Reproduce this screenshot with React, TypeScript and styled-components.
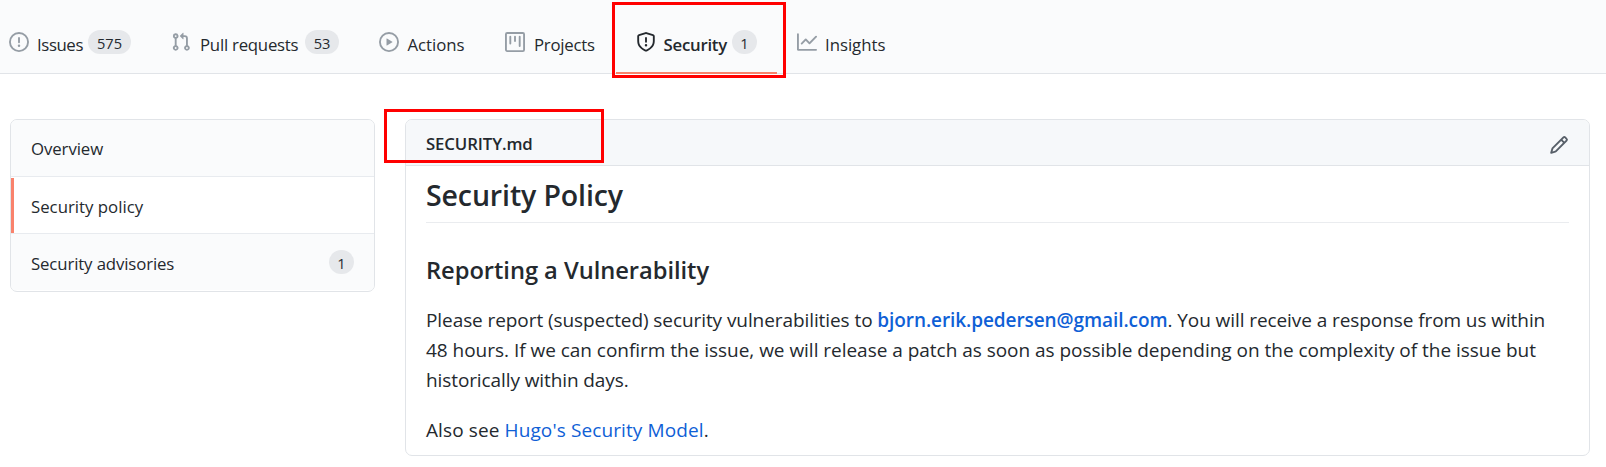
import React from 'react';
import styled, { createGlobalStyle, css } from 'styled-components';

const GlobalStyle = createGlobalStyle`
  * { box-sizing: border-box; }
  body {
    margin: 0;
    background: #fff;
    color: #24292e;
    font-family: "Open Sans", "Noto Sans", sans-serif;
    font-size: 16.8px;
    overflow: hidden;
  }
  h1, h2, p { margin: 0; }
  a { color: #0f60d6; text-decoration: none; }
`;

const Page = styled.div`
  position: relative;
  width: 1606px;
  height: 467px;
  overflow: hidden;
`;

const TabBar = styled.nav`
  display: flex;
  height: 74px;
  padding-top: 12px;
  background: #fafbfc;
  border-bottom: 1px solid #e1e4e8;
`;

const Tab = styled.a<{ $width: number; $active?: boolean }>`
  display: flex;
  flex: none;
  align-items: center;
  width: ${p => p.$width}px;
  height: 62px;
  padding: 0 20px;
  color: #24292e;
  border-bottom: 2px solid ${p => (p.$active ? '#f9826c' : 'transparent')};
  font-weight: ${p => (p.$active ? 600 : 400)};
  &:first-child { margin-left: -11px; }
`;

const Icon = styled.svg<{ $tone?: string }>`
  flex: none;
  width: 20px;
  height: 20px;
  fill: ${p => p.$tone || '#959da5'};
`;

const TabLabel = styled.span<{ $width: number; $spacing: number; $gap: number }>`
  width: ${p => p.$width}px;
  margin: 5px 0 0 ${p => p.$gap}px;
  line-height: 24px;
  letter-spacing: ${p => p.$spacing}px;
  white-space: nowrap;
`;

const Counter = styled.span<{ $width: number }>`
  flex: none;
  width: ${p => p.$width}px;
  height: 24px;
  border-radius: 12px;
  background: #e6e8eb;
  color: #24292e;
  font-size: 14.6px;
  font-weight: 500;
  letter-spacing: 0;
  line-height: 26px;
  text-align: center;
`;

const Content = styled.main`
  display: flex;
  align-items: flex-start;
  gap: 30px;
  padding: 45px 16px 0 10px;
`;

const Menu = styled.aside`
  width: 365px;
  height: 173px;
  border: 1px solid #e1e4e8;
  border-radius: 7px;
  overflow: hidden;
`;

const MenuItem = styled.a<{ $active?: boolean; $spacing: number }>`
  display: flex;
  align-items: center;
  justify-content: space-between;
  height: 56px;
  padding: 0 20px;
  background: #fafbfc;
  color: #24292e;
  letter-spacing: ${p => p.$spacing}px;
  & + & { border-top: 1px solid #e8ebef; height: 57px; }
  ${p => p.$active && css`
    && { height: 58px; }
    background: linear-gradient(#f9826c, #f9826c) 0 1px / 3px 100% no-repeat #fff;
  `}
`;

const MenuLabel = styled.span`
  padding-top: 2px;
`;

const Card = styled.section`
  width: 1185px;
  height: 337px;
  border: 1px solid #e1e4e8;
  border-radius: 7px;
  overflow: hidden;
`;

const CardHeader = styled.header`
  display: flex;
  align-items: center;
  justify-content: space-between;
  height: 46px;
  padding: 5px 20px 0;
  background: #f6f8fa;
  border-bottom: 1px solid #e1e4e8;
`;

const FileName = styled.span`
  margin-bottom: 2px;
  font-size: 16.8px;
  font-weight: 600;
  line-height: 24px;
  letter-spacing: -0.12px;
`;

const Article = styled.article`
  padding: 10px 20px 0;
`;

const Title = styled.h1`
  height: 47px;
  border-bottom: 1px solid #eaecef;
  font-size: 28.5px;
  font-weight: 600;
  line-height: 38px;
  letter-spacing: -0.12px;
`;

const Subtitle = styled.h2`
  margin-top: 29px;
  font-size: 23.7px;
  font-weight: 600;
  line-height: 36px;
  letter-spacing: -0.04px;
`;

const Paragraph = styled.p`
  margin-top: 17px;
  font-size: 19px;
  line-height: 30px;
  & + & { margin-top: 20px; }
`;

const Line = styled.span<{ $spacing: number }>`
  display: block;
  letter-spacing: ${p => p.$spacing}px;
  white-space: nowrap;
`;

const MailLink = styled.a`
  font-weight: 600;
`;

const Marker = styled.div<{ $x: number; $y: number; $w: number; $h: number }>`
  position: absolute;
  left: ${p => p.$x}px;
  top: ${p => p.$y}px;
  width: ${p => p.$w}px;
  height: ${p => p.$h}px;
  border: 3px solid #f00;
  pointer-events: none;
`;

const icons = {
  issue: 'M8 1.5a6.5 6.5 0 100 13 6.5 6.5 0 000-13zM0 8a8 8 0 1116 0A8 8 0 010 8zm9 3a1 1 0 11-2 0 1 1 0 012 0zm-.25-6.25a.75.75 0 00-1.5 0v3.5a.75.75 0 001.5 0v-3.5z',
  pull: 'M7.177 3.073L9.573.677A.25.25 0 0110 .854v4.792a.25.25 0 01-.427.177L7.177 3.427a.25.25 0 010-.354zM3.75 2.5a.75.75 0 100 1.5.75.75 0 000-1.5zm-2.25.75a2.25 2.25 0 113 2.122v5.256a2.251 2.251 0 11-1.5 0V5.372A2.25 2.25 0 011.5 3.25zM11 2.5h-1V4h1a1 1 0 011 1v5.628a2.251 2.251 0 101.5 0V5A2.5 2.5 0 0011 2.5zm1 10.25a.75.75 0 111.5 0 .75.75 0 01-1.5 0zM3.75 12a.75.75 0 100 1.5.75.75 0 000-1.5z',
  play: 'M1.5 8a6.5 6.5 0 1113 0 6.5 6.5 0 01-13 0zM8 0a8 8 0 100 16A8 8 0 008 0zM6.379 5.227A.25.25 0 006 5.442v5.117a.25.25 0 00.379.214l4.264-2.559a.25.25 0 000-.428L6.379 5.227z',
  project: 'M1.75 0A1.75 1.75 0 000 1.75v12.5C0 15.216.784 16 1.75 16h12.5A1.75 1.75 0 0016 14.25V1.75A1.75 1.75 0 0014.25 0H1.75zM1.5 1.75a.25.25 0 01.25-.25h12.5a.25.25 0 01.25.25v12.5a.25.25 0 01-.25.25H1.75a.25.25 0 01-.25-.25V1.75zM11.75 3a.75.75 0 00-.75.75v7.5a.75.75 0 001.5 0v-7.5a.75.75 0 00-.75-.75zm-8.25.75a.75.75 0 011.5 0v5.5a.75.75 0 01-1.5 0v-5.5zM8 3a.75.75 0 00-.75.75v3.5a.75.75 0 001.5 0v-3.5A.75.75 0 008 3z',
  shield: 'M7.467.133a1.75 1.75 0 011.066 0l5.25 1.68A1.75 1.75 0 0115 3.48V7c0 1.566-.32 3.182-1.303 4.682-.983 1.498-2.585 2.813-5.032 3.855a1.7 1.7 0 01-1.33 0c-2.447-1.042-4.049-2.357-5.032-3.855C1.32 10.182 1 8.566 1 7V3.48a1.75 1.75 0 011.217-1.667l5.25-1.68zm.61 1.429a.25.25 0 00-.153 0l-5.25 1.68a.25.25 0 00-.174.238V7c0 1.358.275 2.666 1.057 3.86.784 1.194 2.121 2.34 4.366 3.297a.2.2 0 00.154 0c2.245-.956 3.582-2.104 4.366-3.298C13.225 9.666 13.5 8.36 13.5 7V3.48a.25.25 0 00-.174-.237l-5.25-1.68zM9 10.5a1 1 0 11-2 0 1 1 0 012 0zm-.25-5.75a.75.75 0 10-1.5 0v3a.75.75 0 001.5 0v-3z',
  graph: 'M1.5 1.75a.75.75 0 00-1.5 0v12.5c0 .414.336.75.75.75h14.5a.75.75 0 000-1.5H1.5V1.75zm14.28 2.53a.75.75 0 00-1.06-1.06L10 7.94 7.53 5.47a.75.75 0 00-1.06 0L3.22 8.72a.75.75 0 001.06 1.06L7 7.06l2.47 2.47a.75.75 0 001.06 0l5.25-5.25z',
  pencil: 'M11.013 1.427a1.75 1.75 0 012.474 0l1.086 1.086a1.75 1.75 0 010 2.474l-8.61 8.61c-.21.21-.47.364-.756.445l-3.251.93a.75.75 0 01-.927-.928l.929-3.25a1.75 1.75 0 01.445-.758l8.61-8.61zm1.414 1.06a.25.25 0 00-.354 0L10.811 3.75l1.439 1.44 1.263-1.263a.25.25 0 000-.354l-1.086-1.086zM11.189 6.25L9.75 4.81l-6.286 6.287a.25.25 0 00-.064.108l-.558 1.953 1.953-.558a.249.249 0 00.108-.064l6.286-6.286z',
};

type IconName = keyof typeof icons;

const Octicon = ({ name, tone }: { name: IconName; tone?: string }) => (
  <Icon viewBox="0 0 16 16" $tone={tone} aria-hidden="true">
    <path fillRule="evenodd" d={icons[name]} />
  </Icon>
);

interface TabData {
  label: string;
  icon: IconName;
  width: number;
  gap: number;
  labelWidth: number;
  spacing: number;
  count?: number;
  countWidth?: number;
  active?: boolean;
}

const tabs: TabData[] = [
  { label: 'Issues', icon: 'issue', width: 162, gap: 8, labelWidth: 51, spacing: -0.4, count: 575, countWidth: 43 },
  { label: 'Pull requests', icon: 'pull', width: 208, gap: 9, labelWidth: 105, spacing: -0.24, count: 53, countWidth: 34 },
  { label: 'Actions', icon: 'play', width: 126, gap: 8.5, labelWidth: 57, spacing: -0.05 },
  { label: 'Projects', icon: 'project', width: 131, gap: 9, labelWidth: 62, spacing: -0.24 },
  { label: 'Security', icon: 'shield', width: 161, gap: 7.5, labelWidth: 68.5, spacing: -0.25, count: 1, countWidth: 25, active: true },
  { label: 'Insights', icon: 'graph', width: 128, gap: 8, labelWidth: 61, spacing: -0.03 },
];

export default function App() {
  return (
    <Page>
      <GlobalStyle />
      <TabBar>
        {tabs.map(t => (
          <Tab key={t.label} $width={t.width} $active={t.active}>
            <Octicon name={t.icon} tone={t.active ? '#24292e' : undefined} />
            <TabLabel $width={t.labelWidth} $spacing={t.spacing} $gap={t.gap}>{t.label}</TabLabel>
            {t.count && <Counter $width={t.countWidth || 25}>{t.count}</Counter>}
          </Tab>
        ))}
      </TabBar>
      <Content>
        <Menu>
          <MenuItem $spacing={-0.08}>Overview</MenuItem>
          <MenuItem $spacing={0} $active>
            <MenuLabel>Security policy</MenuLabel>
          </MenuItem>
          <MenuItem $spacing={-0.13}>
            <MenuLabel>Security advisories</MenuLabel>
            <Counter $width={25}>1</Counter>
          </MenuItem>
        </Menu>
        <Card>
          <CardHeader>
            <FileName>SECURITY.md</FileName>
            <Octicon name="pencil" tone="#586069" />
          </CardHeader>
          <Article>
            <Title>Security Policy</Title>
            <Subtitle>Reporting a Vulnerability</Subtitle>
            <Paragraph>
              <Line $spacing={-0.08}>
                Please report (suspected) security vulnerabilities to{' '}
                <MailLink>bjorn.erik.pedersen@gmail.com</MailLink>. You will receive a response from us within
              </Line>
              <Line $spacing={-0.025}>
                48 hours. If we can confirm the issue, we will release a patch as soon as possible depending on the complexity of the issue but
              </Line>
              <Line $spacing={-0.1}>historically within days.</Line>
            </Paragraph>
            <Paragraph>
              <Line $spacing={0.11}>
                Also see <a>Hugo's Security Model</a>.
              </Line>
            </Paragraph>
          </Article>
        </Card>
      </Content>
      <Marker $x={612} $y={2} $w={174} $h={76} />
      <Marker $x={384} $y={109} $w={220} $h={54} />
    </Page>
  );
}
